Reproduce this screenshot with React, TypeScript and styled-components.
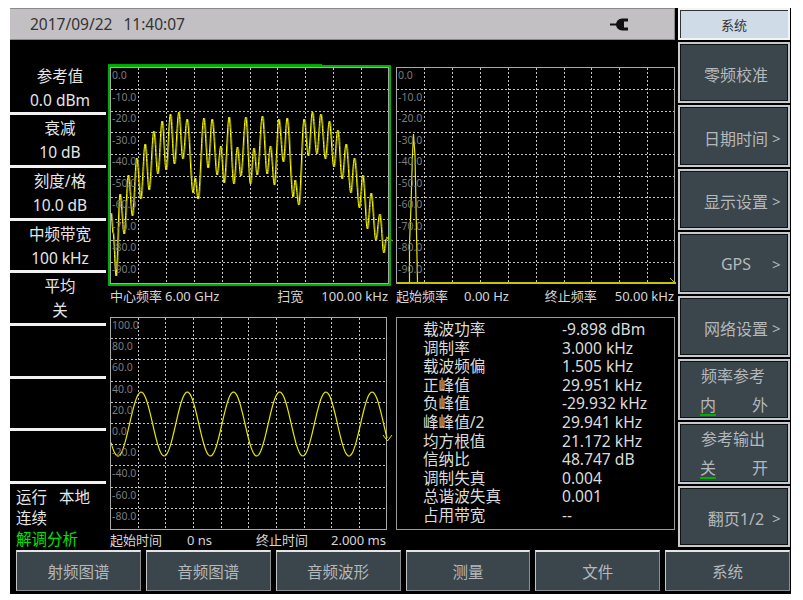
import { Fragment, type ReactNode } from 'react';
import styled, { createGlobalStyle } from 'styled-components';

const FONT = '"Noto Sans", "Noto Sans CJK SC", sans-serif';
const PANEL = '#3b454c';

const GlobalStyle = createGlobalStyle`
  html, body {
    margin: 0;
    background: #fff;
  }
  #root {
    padding: 8px 0 0 10px;
    font-family: ${FONT};
  }
`;

type Point = [number, number];

// peaks and troughs of the rf spectrum trace, in page pixels
const spectrum: Point[] = [
  [110, 212], [112, 232], [115, 275], [119, 193], [123, 233], [127.3, 174], [131.3, 215], [135.7, 157],
  [139.7, 198], [144, 143], [148, 189], [152.7, 130], [156.7, 173], [161, 120], [165, 169], [169.3, 113],
  [173.3, 163], [177.7, 111], [181.7, 158], [186, 118], [192, 192], [194, 177], [197, 198], [202.7, 117],
  [207, 167], [211, 118], [216, 174], [219.7, 145], [223, 182], [228, 116], [232.7, 183], [236.3, 146],
  [239.7, 175], [244.7, 116], [249.3, 183], [252.8, 147], [256, 174], [261.3, 115], [266, 173], [269.3, 145],
  [273.3, 184], [277.7, 118], [282.3, 161], [286, 117], [292, 196], [294, 179], [297.7, 204], [303, 118],
  [307.3, 155], [311.3, 111], [315.7, 153], [319.7, 113], [324.3, 158], [328.3, 120], [332.7, 166], [336.7, 129],
  [341, 178], [345, 143], [349.7, 192], [353.3, 157], [358.3, 207], [361.7, 174], [366.3, 228], [370, 192],
  [374.7, 239], [378.7, 213], [382.7, 252], [385, 238], [388, 236],
];

const smooth = (pts: Point[]) => {
  let d = `M${pts[0][0]} ${pts[0][1]}`;
  for (let i = 0; i < pts.length - 1; i++) {
    const [x0, y0] = pts[i];
    const [x1, y1] = pts[i + 1];
    const k = (x1 - x0) * 0.35;
    d += ` C${(x0 + k).toFixed(1)} ${y0} ${(x1 - k).toFixed(1)} ${y1} ${x1} ${y1}`;
  }
  return d;
};

const sine = () => {
  const pts: string[] = [];
  for (let x = 110; x <= 386; x += 1) {
    const y = 423 + 32 * Math.cos((2 * Math.PI * (x - 117)) / 46.2);
    pts.push(`${x},${y.toFixed(1)}`);
  }
  return pts.join(' ');
};

const Screen = styled.div`
  width: 781px;
  height: 586px;
  background: #000;
  display: flex;
  flex-direction: column;
`;

const Upper = styled.div`
  height: 542px;
  display: flex;
`;

const Main = styled.div`
  width: 667px;
  display: flex;
  flex-direction: column;
`;

const TopBar = styled.div`
  height: 32px;
  width: 665px;
  box-sizing: border-box;
  flex: none;
  background: #c3c0c3;
  border-top: 1px solid #8a8a8a;
  border-bottom: 1px solid #8a8a8a;
  border-right: 1px solid #8a8a8a;
  padding: 0 46px 0 20px;
  display: flex;
  align-items: center;
  justify-content: space-between;
  color: #333;
  font-size: 15.5px;
`;

const Stamp = styled.div`
  display: flex;
  gap: 11px;
`;

const Body = styled.div`
  flex: 1;
  display: flex;
`;

const Params = styled.div`
  width: 96px;
  padding-top: 22.6px;
  flex: none;
`;

const Param = styled.div`
  height: 52.7px;
  box-sizing: border-box;
  border-bottom: 3px solid #f2f2f2;
  padding: 1px 0 0 4px;
  text-align: center;
  color: #e6e6e6;
  font-size: 15.5px;
  line-height: 24px;
`;

const Status = styled.div`
  padding: 3px 0 0 6px;
  font-size: 15.5px;
  line-height: 21px;
  color: #e6e6e6;
`;

const StatusRow = styled.div<{ $active?: boolean }>`
  display: flex;
  gap: 12px;
  color: ${(p) => (p.$active ? '#00e000' : '#e6e6e6')};
`;

const Plots = styled.div`
  margin-left: 4px;
  padding-top: 27px;
  display: grid;
  grid-template-columns: 279px 279px;
  grid-template-rows: 217px 33px 213px 20px;
  column-gap: 7px;
`;

const PlotBox = styled.div<{ $selected?: boolean; $w: number; $h: number }>`
  position: relative;
  width: ${(p) => p.$w}px;
  height: ${(p) => p.$h}px;
  box-sizing: border-box;
  border: 1px solid #a8a8a8;
  ${(p) => p.$selected && 'outline: 2px solid #00b000; outline-offset: 0;'}

  svg {
    display: block;
    overflow: visible;
  }
`;

const GreenTick = styled.div`
  position: absolute;
  left: -3px;
  top: -4px;
  width: 214px;
  height: 1px;
  background: #00a000;
`;

const AxisLabels = styled.div<{ $pitch: number }>`
  position: absolute;
  left: 1px;
  top: -3px;
  font-size: 10.5px;
  color: #7d7d7d;
  line-height: ${(p) => p.$pitch}px;
`;

const Caption = styled.div<{ $top?: number; $right?: number }>`
  display: flex;
  justify-content: space-between;
  padding-top: ${(p) => p.$top ?? 0}px;
  padding-right: ${(p) => p.$right ?? 0}px;
  height: 20px;
  font-size: 13px;
  line-height: 20px;
  color: #d6d6d6;
  white-space: nowrap;
`;

const CaptionGroup = styled.div<{ $gap: number }>`
  display: flex;
  gap: ${(p) => p.$gap}px;
`;

const Readout = styled.div`
  width: 279px;
  height: 213px;
  box-sizing: border-box;
  border: 1px solid #9a9a9a;
  padding: 2px 0 0 26px;
  display: grid;
  grid-template-columns: 139px 1fr;
  grid-auto-rows: 18.6px;
  font-size: 15.6px;
  line-height: 18.6px;
  color: #dcdcdc;
  white-space: nowrap;
`;

const Side = styled.div`
  width: 114px;
  box-sizing: border-box;
  padding: 0 1px 3px;
  display: flex;
  flex-direction: column;
  gap: 2px;
`;

const SideHeader = styled.div`
  height: 32px;
  flex: none;
  box-sizing: border-box;
  border: 2px solid #f4f4f4;
  background: #cfdbe6;
  box-shadow: inset 1px 1px 0 #333;
  display: flex;
  align-items: center;
  justify-content: center;
  font-size: 13px;
  color: #333;
`;

const SoftButton = styled.div`
  flex: 1 1 0;
  min-height: 0;
  box-sizing: border-box;
  border: 2px solid #c6cacc;
  box-shadow: inset 0 0 0 1px #111;
  background: ${PANEL};
  color: #b4b8ba;
  font-size: 16px;
  display: flex;
  align-items: center;
  padding: 3px 0 0 24px;
`;

const ButtonLabel = styled.span`
  width: 64px;
  text-align: center;
  white-space: nowrap;
`;

const Chevron = styled.span`
  margin-left: 4px;
  font-size: 15px;
`;

const ToggleButton = styled(SoftButton)`
  flex-direction: column;
  align-items: stretch;
  padding: 3px 0 0;
`;

const ToggleTitle = styled.div`
  text-align: center;
  line-height: 24px;
  margin-right: 2px;
`;

const ToggleOptions = styled.div`
  display: flex;
  justify-content: space-between;
  padding: 5px 20px 0;
  line-height: 24px;
`;

const ToggleOption = styled.span<{ $on?: boolean }>`
  width: 16px;
  text-align: center;
  height: 23px;
  box-sizing: border-box;
  border-bottom: 2px solid ${(p) => (p.$on ? '#00b000' : 'transparent')};
`;

const Tabs = styled.div`
  flex: 1;
  padding: 0 1px 3px 6px;
  display: grid;
  grid-template-columns: repeat(6, 1fr);
  gap: 5px;
`;

const Tab = styled.div`
  box-sizing: border-box;
  background: ${PANEL};
  border: 1px solid #8a8e90;
  border-top: 2px solid #e4e4e4;
  border-left-color: #c4c4c4;
  color: #b4b8ba;
  font-size: 15.5px;
  display: flex;
  align-items: center;
  justify-content: center;
`;

const vGrid1 = [137.5, 165.5, 193.5, 221.5, 249.5, 276.5, 304.5, 332.5, 360.5];
const hGrid1 = [88.5, 110.5, 131.5, 153.5, 175.5, 196.5, 218.5, 239.5, 261.5];
const vGrid2 = [423.5, 451.5, 479.5, 507.5, 535.5, 563.5, 590.5, 618.5, 646.5];
const vGrid3 = [137.5, 164.5, 192.5, 220.5, 247.5, 275.5, 303.5, 330.5, 358.5];
const hGrid3 = [337.5, 358.5, 380.5, 401.5, 422.5, 443.5, 464.5, 486.5, 507.5];

const dbLabels = ['0.0', '-10.0', '-20.0', '-30.0', '-40.0', '-50.0', '-60.0', '-70.0', '-80.0', '-90.0'];
const levelLabels = ['100.0', '80.0', '60.0', '40.0', '20.0', '0.0', '-20.0', '-40.0', '-60.0', '-80.0'];

function Grid({ vs, hs, box }: { vs: number[]; hs: number[]; box: [number, number, number, number] }) {
  const [x, y, w, h] = box;
  return (
    <g stroke="#c4c4c4" strokeWidth="1" strokeDasharray="2 2" fill="none" shapeRendering="crispEdges">
      {vs.map((v) => (
        <line key={v} x1={v} x2={v} y1={y} y2={y + h} />
      ))}
      {hs.map((v) => (
        <line key={v} x1={x} x2={x + w} y1={v} y2={v} />
      ))}
    </g>
  );
}

function Plot({
  box,
  labels,
  pitch,
  selected,
  vs,
  hs,
  children,
}: {
  box: [number, number, number, number];
  labels: string[];
  pitch: number;
  selected?: boolean;
  vs: number[];
  hs: number[];
  children: ReactNode;
}) {
  const [x, y, w, h] = box;
  return (
    <PlotBox $w={w + 2} $h={h + 2} $selected={selected}>
      {selected && <GreenTick />}
      <svg width={w} height={h} viewBox={`${x} ${y} ${w} ${h}`}>
        <Grid vs={vs} hs={hs} box={box} />
        {children}
      </svg>
      <AxisLabels $pitch={pitch}>
        {labels.map((l) => (
          <div key={l}>{l}</div>
        ))}
      </AxisLabels>
    </PlotBox>
  );
}

const readings = [
  ['载波功率', '-9.898 dBm'],
  ['调制率', '3.000 kHz'],
  ['载波频偏', '1.505 kHz'],
  ['正峰值', '29.951 kHz'],
  ['负峰值', '-29.932 kHz'],
  ['峰峰值/2', '29.941 kHz'],
  ['均方根值', '21.172 kHz'],
  ['信纳比', '48.747 dB'],
  ['调制失真', '0.004'],
  ['总谐波失真', '0.001'],
  ['占用带宽', '--'],
];

const params = [
  ['参考值', '0.0 dBm'],
  ['衰减', '10 dB'],
  ['刻度/格', '10.0 dB'],
  ['中频带宽', '100 kHz'],
  ['平均', '关'],
  ['', ''],
  ['', ''],
  ['', ''],
];

const tabs = ['射频图谱', '音频图谱', '音频波形', '测量', '文件', '系统'];

const menuTop = [
  { label: '零频校准' },
  { label: '日期时间', more: true },
  { label: '显示设置', more: true },
  { label: 'GPS', more: true },
  { label: '网络设置', more: true },
];

export default function App() {
  const d = smooth(spectrum);
  return (
    <>
      <GlobalStyle />
      <Screen>
        <Upper>
          <Main>
            <TopBar>
              <Stamp>
                <span>2017/09/22</span>
                <span>11:40:07</span>
              </Stamp>
              <svg width="18" height="13" viewBox="0 0 18 13">
                <path d="M0 5.5h7V7.5H0z" fill="#111" />
                <path d="M6 6.5a6 6 0 0 1 6-6h6v3h-4v6h4v3h-6a6 6 0 0 1-6-6z" fill="#111" />
              </svg>
            </TopBar>
            <Body>
              <Params>
                {params.map(([label, value], i) => (
                  <Param key={i}>
                    <div>{label}</div>
                    <div>{value}</div>
                  </Param>
                ))}
                <Status>
                  <StatusRow>
                    <span>运行</span>
                    <span>本地</span>
                  </StatusRow>
                  <StatusRow>连续</StatusRow>
                  <StatusRow $active>解调分析</StatusRow>
                </Status>
              </Params>
              <Plots>
                <Plot box={[110, 67, 277, 215]} labels={dbLabels} pitch={21.55} vs={vGrid1} hs={hGrid1} selected>
                  <path d={d} fill="none" stroke="#7c7c00" strokeWidth="1" transform="translate(0.9 0)" />
                  <path d={d} fill="none" stroke="#ffff00" strokeWidth="1" />
                  <path d="M385 236l7 4M388 233l1 8" stroke="#c8c800" strokeWidth="1" fill="none" />
                </Plot>
                <Plot box={[396, 67, 277, 215]} labels={dbLabels} pitch={21.55} vs={vGrid2} hs={hGrid1}>
                  <path
                    d="M408.5 282V243L410 205L411.5 153L412.5 133L414 155L415 205L416.5 282"
                    fill="none"
                    stroke="#e6e600"
                    strokeWidth="1.2"
                  />
                  <path d="M396 282H675" stroke="#c4c400" strokeWidth="2" fill="none" />
                  <path d="M669 277l5 5" stroke="#c4c400" strokeWidth="1" fill="none" />
                </Plot>
                <Caption $top={2} $right={1}>
                  <CaptionGroup $gap={3}>
                    <span>中心频率</span>
                    <span>6.00 GHz</span>
                  </CaptionGroup>
                  <CaptionGroup $gap={18}>
                    <span>扫宽</span>
                    <span>100.00 kHz</span>
                  </CaptionGroup>
                </Caption>
                <Caption $top={2} $right={1}>
                  <CaptionGroup $gap={16}>
                    <span>起始频率</span>
                    <span>0.00 Hz</span>
                  </CaptionGroup>
                  <CaptionGroup $gap={18}>
                    <span>终止频率</span>
                    <span>50.00 kHz</span>
                  </CaptionGroup>
                </Caption>
                <Plot box={[110, 317, 275, 211]} labels={levelLabels} pitch={21.2} vs={vGrid3} hs={hGrid3}>
                  <polyline points={sine()} fill="none" stroke="#e8e800" strokeWidth="1.2" />
                  <path d="M382 434l4.5 6 4.5-6" fill="none" stroke="#e8e800" strokeWidth="1" />
                </Plot>
                <Readout>
                  {readings.map(([label, value]) => (
                    <Fragment key={label}>
                      <span>{label}</span>
                      <span>{value}</span>
                    </Fragment>
                  ))}
                </Readout>
                <Caption $right={3}>
                  <CaptionGroup $gap={25}>
                    <span>起始时间</span>
                    <span>0 ns</span>
                  </CaptionGroup>
                  <CaptionGroup $gap={23}>
                    <span>终止时间</span>
                    <span>2.000 ms</span>
                  </CaptionGroup>
                </Caption>
              </Plots>
            </Body>
          </Main>
          <Side>
            <SideHeader>系统</SideHeader>
            {menuTop.map((m) => (
              <SoftButton key={m.label}>
                <ButtonLabel>{m.label}</ButtonLabel>
                {m.more && <Chevron>&gt;</Chevron>}
              </SoftButton>
            ))}
            <ToggleButton>
              <ToggleTitle>频率参考</ToggleTitle>
              <ToggleOptions>
                <ToggleOption $on>内</ToggleOption>
                <ToggleOption>外</ToggleOption>
              </ToggleOptions>
            </ToggleButton>
            <ToggleButton>
              <ToggleTitle>参考输出</ToggleTitle>
              <ToggleOptions>
                <ToggleOption $on>关</ToggleOption>
                <ToggleOption>开</ToggleOption>
              </ToggleOptions>
            </ToggleButton>
            <SoftButton>
              <ButtonLabel>翻页1/2</ButtonLabel>
              <Chevron>&gt;</Chevron>
            </SoftButton>
          </Side>
        </Upper>
        <Tabs>
          {tabs.map((t) => (
            <Tab key={t}>{t}</Tab>
          ))}
        </Tabs>
      </Screen>
    </>
  );
}
